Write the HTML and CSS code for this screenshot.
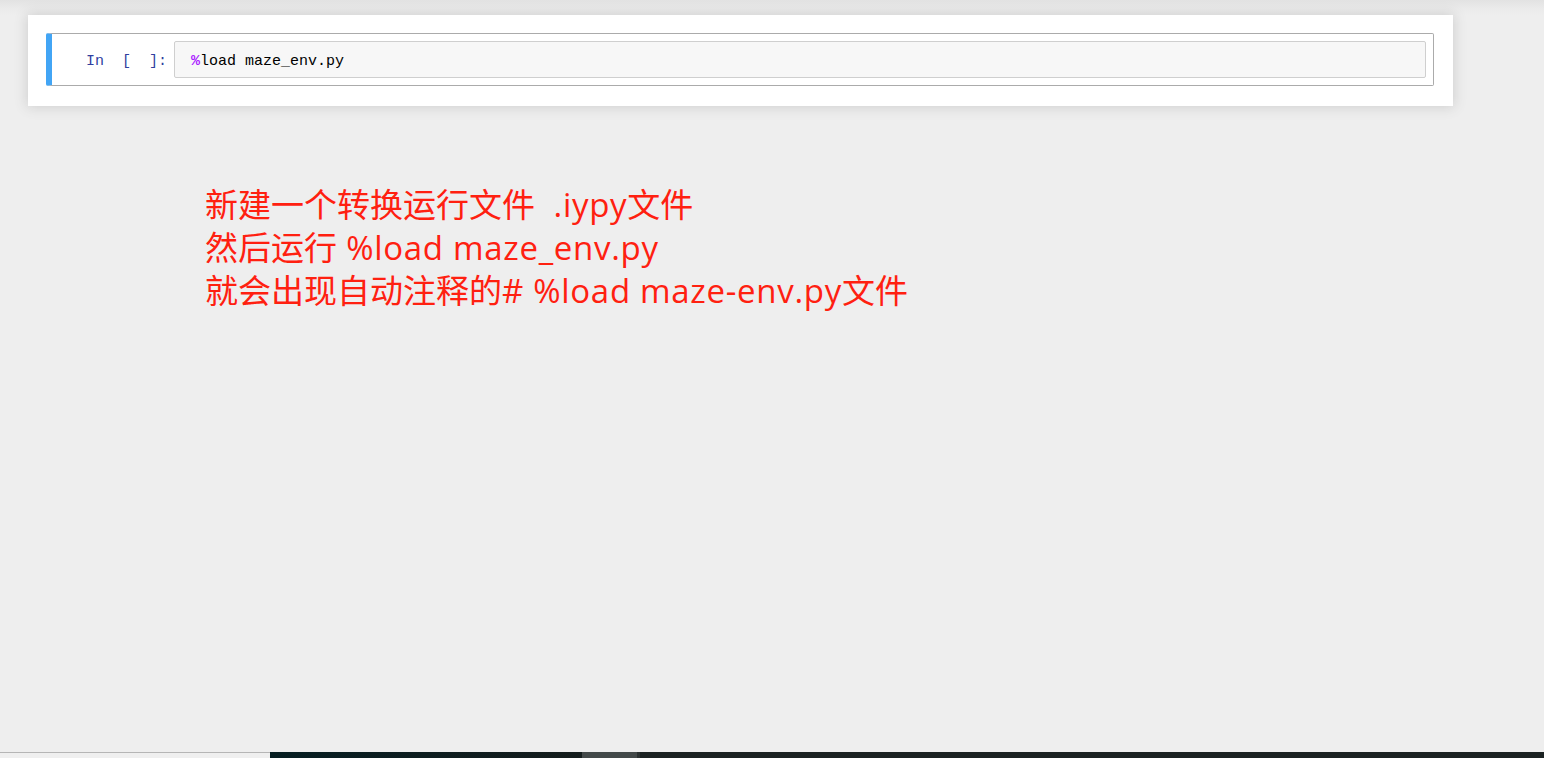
FILE: index.html
```html
<!DOCTYPE html>
<html lang="zh">
<head>
<meta charset="utf-8">
<title>Notebook</title>
<link rel="stylesheet" href="styles.css">
</head>
<body>
<div class="page">
  <div class="site">
    <div class="notebook-container">
      <div class="cell">
        <div class="prompt">In&nbsp;&nbsp;[&nbsp;&nbsp;]:</div>
        <div class="input-area"><span class="magic">%</span>load maze_env.py</div>
      </div>
    </div>
    <div class="note">
      <p>新建一个转换运行文件<span class="lat">&nbsp;&nbsp;.iypy</span>文件</p>
      <p>然后运行<span class="lat"> %load maze_env.py</span></p>
      <p>就会出现自动注释的<span class="lat"># %load maze-env.py</span>文件</p>
    </div>
  </div>
  <div class="taskbar">
    <div class="tb-left"></div>
    <div class="tb-dark"></div>
    <div class="tb-btn"></div>
    <div class="tb-rest"></div>
  </div>
</div>
</body>
</html>
```

FILE: styles.css
```css
html, body {
  margin: 0;
  padding: 0;
  height: 100%;
}
body {
  background: #eeeeee;
  overflow: hidden;
}
.page {
  height: 758px;
  display: flex;
  flex-direction: column;
  background: linear-gradient(to bottom, #e2e2e2 0px, #eaeaea 8px, #eeeeee 16px);
}
.site {
  flex: 1;
  padding: 15px 0 0 28px;
}
.notebook-container {
  width: 1425px;
  height: 91px;
  box-sizing: border-box;
  background: #ffffff;
  box-shadow: 0 0 12px 1px rgba(87, 87, 87, 0.2);
  padding: 18px 19px 0 18px;
}
.cell {
  display: flex;
  align-items: center;
  height: 53px;
  box-sizing: border-box;
  border: 1px solid #ababab;
  border-left: 6px solid #42a5f5;
  border-radius: 2px;
  padding: 0 7px 0 0;
}
.prompt {
  width: 122px;
  flex: none;
  box-sizing: border-box;
  padding: 3px 7px 0 0;
  text-align: right;
  font-family: "Liberation Mono", monospace;
  font-size: 15px;
  color: #303f9f;
  white-space: pre;
}
.input-area {
  flex: 1;
  height: 37px;
  box-sizing: border-box;
  background: #f7f7f7;
  border: 1px solid #cfcfcf;
  border-radius: 2px;
  padding: 3px 0 0 16px;
  display: flex;
  align-items: center;
  font-family: "Liberation Mono", monospace;
  font-size: 15px;
  color: #000000;
  white-space: pre;
}
.magic {
  color: #aa22ff;
  font-weight: bold;
}
.note {
  padding: 77px 0 0 177px;
  font-family: "Open Sans", "Noto Sans CJK SC", sans-serif;
  font-size: 33px;
  color: #ff2010;
}
.note p {
  margin: 0;
  line-height: 43px;
  white-space: pre;
}
.lat {
  letter-spacing: 0.7px;
}
.taskbar {
  height: 6px;
  flex: none;
  display: flex;
}
.tb-left {
  width: 270px;
  background: #efefef;
  border-top: 1px solid #b5b5b5;
  box-sizing: border-box;
}
.tb-dark {
  width: 312px;
  background: linear-gradient(to right, #061e22, #141c1c);
}
.tb-btn {
  width: 55px;
  background: #434949;
  border-right: 3px solid #2a3030;
}
.tb-rest {
  flex: 1;
  background: #1b2222;
}
```
